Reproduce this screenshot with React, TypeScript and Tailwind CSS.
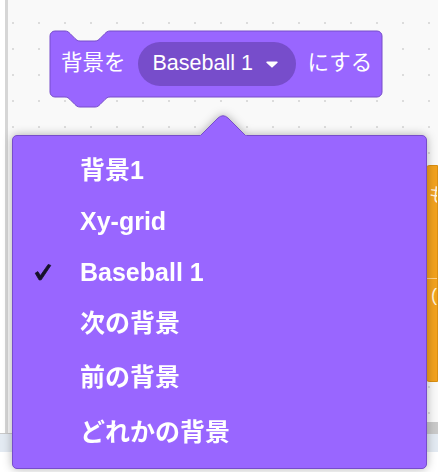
import React from "react";

interface MenuItem {
  label: string;
  height: string;
  checked?: boolean;
}

const MENU_ITEMS: MenuItem[] = [
  { label: "背景1", height: "h-[51px]" },
  { label: "Xy-grid", height: "h-[51px]" },
  { label: "Baseball 1", height: "h-[50px]", checked: true },
  { label: "次の背景", height: "h-[53px]" },
  { label: "前の背景", height: "h-[55px]" },
  { label: "どれかの背景", height: "h-[55px]" },
];

const BLOCK_PATH =
  "M0,5 A5,5 0 0 1 5,0 H15 c2.5,0 3.75,1.25 5,2.5 l5,5 c1.25,1.25 2.5,2.5 5,2.5 h15 c2.5,0 3.75,-1.25 5,-2.5 l5,-5 c1.25,-1.25 2.5,-2.5 5,-2.5 H327 a5,5 0 0 1 5,5 V61 a5,5 0 0 1 -5,5 H60 c-2.5,0 -3.75,1.25 -5,2.5 l-5,5 c-1.25,1.25 -2.5,2.5 -5,2.5 h-15 c-2.5,0 -3.75,-1.25 -5,-2.5 l-5,-5 c-1.25,-1.25 -2.5,-2.5 -5,-2.5 H5 a5,5 0 0 1 -5,-5 Z";

function CheckMark() {
  return (
    <svg width="18" height="18" viewBox="0 0 18 18" className="shrink-0">
      <path
        d="M1.2,10.2 L3.8,8.6 L6.4,12.6 L14.2,1.4 L16.8,2.4 L7.2,16.8 L5.2,17 Z"
        fill="#17112a"
        stroke="#17112a"
        strokeWidth="0.8"
        strokeLinejoin="round"
      />
    </svg>
  );
}

function LooksBlock() {
  return (
    <div className="absolute left-[50px] top-[31px] w-[332px] h-[66px]">
      <svg
        width="334"
        height="79"
        viewBox="-1 -1 334 79"
        className="absolute -left-[1px] -top-[1px]"
      >
        <path d={BLOCK_PATH} fill="#9966ff" stroke="#774dcb" strokeWidth="1" />
      </svg>
      <div className="relative flex items-center h-[66px] pl-[11px] gap-[12px] text-white text-[21.5px] leading-none">
        <span>背景を</span>
        <div className="flex items-center h-[44px] w-[158px] rounded-full bg-[#774dcb] pl-[15px] pr-[18px]">
          <span>Baseball 1</span>
          <svg width="12" height="7" viewBox="0 0 12 7" className="ml-auto">
            <path d="M1,0.5 H11 a0.8,0.8 0 0 1 0.5,1.3 L6.6,6.3 a0.8,0.8 0 0 1 -1.2,0 L0.5,1.8 A0.8,0.8 0 0 1 1,0.5 Z" fill="#ffffff" />
          </svg>
        </div>
        <span>にする</span>
      </div>
    </div>
  );
}

function Dropdown() {
  return (
    <div className="absolute left-[12px] top-[135px] w-[415px] h-[334px] drop-shadow-[0_0_5px_rgba(0,0,0,0.3)]">
      <svg width="47" height="22" viewBox="0 0 47 22" className="absolute left-[188px] -top-[20px]">
        <path
          d="M0,21 L18,3 Q23,-1.5 28,3 L46,21"
          fill="#9966ff"
          stroke="#774dcb"
          strokeWidth="1"
        />
        <rect x="0" y="20.5" width="47" height="2" fill="#9966ff" />
      </svg>
      <div className="h-full rounded-[5px] border border-[#774dcb] bg-[#9966ff] pt-[9px]">
        {MENU_ITEMS.map((item) => (
          <div key={item.label} className={`flex items-center ${item.height}`}>
            <div className="w-[67px] flex justify-end pr-[28px]">
              {item.checked && <CheckMark />}
            </div>
            <span className="text-[25px] font-bold text-white leading-none">{item.label}</span>
          </div>
        ))}
      </div>
    </div>
  );
}

export default function App() {
  return (
    <div
      className="relative w-[438px] h-[472px] overflow-hidden bg-white"
      style={{ fontFamily: '"Liberation Sans", Arial, "Noto Sans CJK JP", sans-serif' }}
    >
      {/* Workspace + bottom bar */}
      <div className="flex flex-col h-full">
        <div className="flex h-[433px]">
          <div className="w-[5px] bg-white" />
          <div className="w-[3px] bg-[#d6d6d6]" />
          <div className="relative flex-1 bg-[#f9f9f9] bg-[radial-gradient(circle,#dcdcdc_1px,transparent_1.5px)] bg-[size:26px_26px] bg-[position:-8px_10px]">
            {/* orange control block peeking in from the right */}
            <div className="absolute right-0 top-[165px] w-[14px] h-[217px] rounded-tl-[6px] rounded-bl-[6px] bg-[#f2a21e] border border-[#d98f12] overflow-hidden">
              <span className="absolute left-[4px] top-[20px] text-[19px] leading-none text-[#fff3dc]">も</span>
              <div className="absolute left-0 right-0 top-[112px] h-px bg-[#ffd28a]" />
              <span className="absolute left-[6px] top-[120px] text-[18px] leading-none text-[#fff3dc]">(</span>
            </div>
            <div className="absolute right-0 top-[422px] w-[12px] h-[11px] bg-[#c9c9c9]" />
          </div>
        </div>
        <div className="h-[19px] border-t border-[#c9c9c9] bg-[#e3eaf2]" />
        <div className="flex-1 bg-white" />
      </div>

      <LooksBlock />
      <Dropdown />
    </div>
  );
}
